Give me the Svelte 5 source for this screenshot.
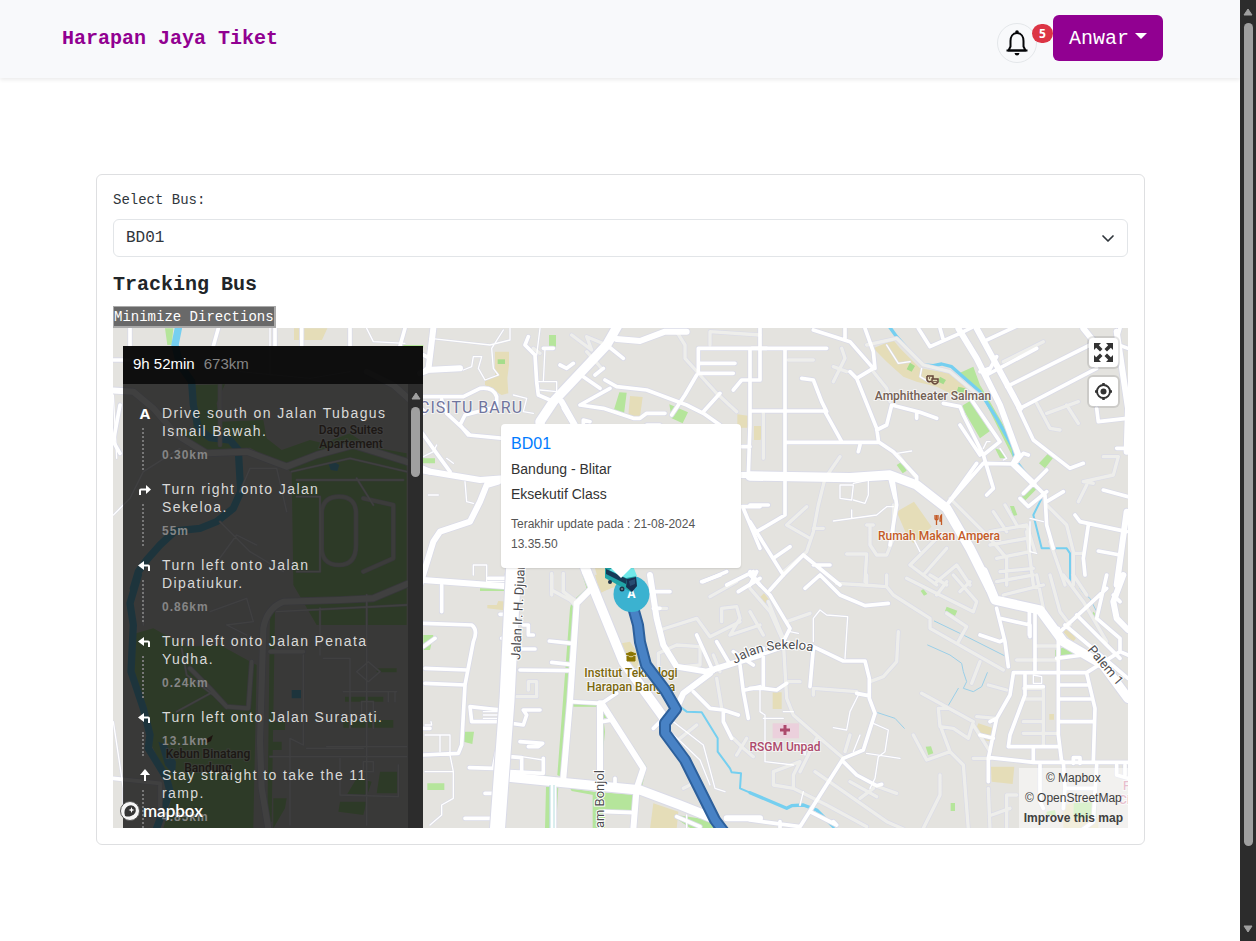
<script>
  let bus = $state('BD01');
  let showDirections = $state(true);

  const steps = [
    { icon: 'depart', text: 'Drive south on Jalan Tubagus Ismail Bawah.', distance: '0.30km' },
    { icon: 'right', text: 'Turn right onto Jalan Sekeloa.', distance: '55m' },
    { icon: 'left', text: 'Turn left onto Jalan Dipatiukur.', distance: '0.86km' },
    { icon: 'left', text: 'Turn left onto Jalan Penata Yudha.', distance: '0.24km' },
    { icon: 'left', text: 'Turn left onto Jalan Surapati.', distance: '13.1km' },
    { icon: 'straight', text: 'Stay straight to take the 11 ramp.', distance: '4.85km' }
  ];

  // Map geometry, one entry per tile; each tile is drawn at a third of its own units.
  const tiles = [
    {
      x: -3, y: -3,
      green: 'M165 10H190L185 60H172ZM250 180L345 178L320 235L330 290L460 285L470 340L515 375L600 345L640 355L720 325L780 365L890 385V900H620L550 780L545 440L420 368L290 375L180 310L250 320ZM880 60H940V68H880ZM940 400L960 405V415L940 410Z',
      tan: 'M552 10H652L636 45H552Z',
      water: 'M205 10L195 60L210 120L245 170L250 240L265 310L300 338L360 345L385 375L392 500L370 550L320 590L270 610L195 618L150 660L110 705L85 740L70 790',
      pond: 'M655 415L672 410L688 420L682 438L662 435Z',
      faint: 'M635 560Q640 515 687 515Q740 515 738 570V660Q738 720 687 720Q632 720 635 660ZM760 520L850 540V700L760 740M330 180V360',
      thin: 'M10 570L60 520L100 440L210 370M480 10V150M770 10L790 50L885 55M390 140L600 160L720 140M10 210L20 400M545 440L720 400L890 440M560 465H880M560 515H630V740H560M390 500L420 430H500L530 560M330 590L420 680L520 740M300 740L380 630L440 660M740 460L790 540',
      street: 'M60 10V63M325 10L310 63M495 10V63M575 10V63M720 10V63M885 10L870 63M10 105H60M30 240L10 350L30 385M940 90L960 100',
      major: 'M-10 195L70 200L130 250L200 330L290 385L410 380L530 425L620 390L730 360L890 410L960 440M770 140L850 180L940 260',
      trunk: ''
    },
    {
      x: -3, y: 247,
      green: 'M78 175L130 160L230 215L330 210L440 270L430 760H160L190 650L120 500L100 400L70 290ZM480 110H495L485 740H472ZM600 0H890L790 55L680 45ZM480 440H525V465H480ZM480 500H515V525H480ZM740 610L785 620L770 665L710 660ZM810 590H865V655H800ZM490 670H530L525 700L490 760ZM690 680H770L760 720L685 710ZM705 365H820V380H705ZM800 280H860V292H800ZM700 435H850V458H700ZM940 180H960V220H940Z',
      tan: '',
      water: 'M85 0L60 85L70 150L63 290L100 400L120 480L115 520L170 610L180 650L140 760',
      pond: 'M545 345H573V370H545ZM145 500L170 510L198 560L195 605L165 570Z',
      faint: '',
      thin: 'M100 20V150M215 220L230 300L310 360L350 400M200 410L310 350M500 110L890 90M580 240V510L540 490V750M480 545H890M690 550V660L865 665V570M630 100V240M640 250H720V460M10 440L40 640V700M300 110L410 70L430 140L350 150L410 180M770 60V750M740 290L775 260L810 290L775 320ZM755 440V380H790V460M700 350H860M835 380V350H855V380M590 520H760M650 515H890M760 560H790V590H760Z',
      street: 'M480 230H580M425 260L415 400L350 395L300 340L240 280M940 460H960M10 610L150 625V720',
      major: 'M920 15L790 70L690 75L520 80Q470 100 460 160L450 500L455 640L475 760',
      trunk: ''
    },
    {
      x: 307, y: -3,
      green: 'M387 30H408V65H387ZM598 202L620 203L612 267L580 260ZM748 238L804 262L788 295L755 280ZM480 730L500 790H515L490 730ZM5 400L45 400V415H5Z',
      tan: 'M225 80H267V120L262 160L265 205L245 210L195 180L195 160L225 155ZM630 213L668 216L660 275L625 272ZM952 268L984 272V308H952ZM1002 303H1030V345L1005 335ZM525 730H555L600 780L545 800Z',
      park: 'M233 103H255V117H233Z',
      water: '',
      pond: '',
      faint: 'M455 30L515 75L500 35L560 60M500 80L545 130M770 20L795 60V100L840 150L890 205L950 260M870 60V20L1020 30M340 70L360 85M395 745V810M430 745V800',
      thin: 'M30 40L210 60L270 45V10M250 15L215 70L220 130L235 150L195 165L175 130L185 95H160L155 125L130 135M360 10L350 90M375 70L370 170M280 210L320 220L310 260L340 265M355 170H410V200L360 195M25 510H55M10 395L40 380L50 360M135 470L140 530L160 535M160 750V720H200V770H260M80 400L100 415',
      street: 'M325 35L315 60L345 90L350 170L355 210L390 225M370 70H400M420 120L440 130L460 115M560 60L610 100M490 155L540 190M570 190L480 240L550 250L640 280H660L680 265H735M555 165L590 185L680 195L800 240L850 265L900 300M830 150L795 210L755 270M835 145V70H1040M835 115H945M835 145H940M940 195L965 165H1020V-10M990 70V300L985 450M965 365H990M10 215L130 215L180 190Q220 185 230 215V245L135 270L120 300L145 330L250 340M65 225L80 265L150 330M0 315L50 385L90 440M430 250L460 300M490 320V285L510 290M900 205L850 260M965 545H1020M970 550L1020 670M850 770L920 740M920 780L1000 740M680 300H720M525 150L550 130',
      major: 'M40 10L25 135L0 145M20 135L120 130M590 42L660 48L735 20H800M0 435L90 450L180 465L250 460M235 470L200 480L180 530L150 590L60 620L40 650L0 780M425 230L470 310M955 450H1040',
      trunk: 'M600 -10L560 60L400 230L360 290L370 420L500 740'
    },
    {
      x: 307, y: 247,
      green: 'M490 0H510L515 40L470 85L465 160L430 610L412 600L450 100L455 80L500 40ZM265 40H278L270 200L262 150ZM180 40H270V48H180ZM12 180H40L30 225H12ZM133 470L162 470L157 507L130 500ZM270 588L410 605L400 615L265 600ZM378 635H415L408 762H375ZM22 625H73V645H22ZM455 385L545 390L555 470L545 570H535V395H460ZM550 390L570 430H548ZM580 440L590 440L680 575L665 640L650 630L665 585ZM518 650L655 660L640 762H630L640 705H555V762H518ZM770 720L870 735L900 762H815L775 735ZM450 640L520 650V660L455 648Z',
      tan: 'M525 0L580 -10L590 30L540 55ZM605 205L630 200L660 245L650 280L622 270ZM202 90L230 90L235 78L265 80V107L202 100ZM700 685L775 710L770 762H690Z',
      water: '',
      pond: '',
      faint: 'M395 0V45L450 75L465 90M430 0V50L470 80M720 165L830 130L870 185L960 140M715 270V235L770 210L840 215V270L790 275M870 65L950 20M905 140V100L950 95L960 130L930 180L1020 150M890 310L905 400M900 290L880 240M940 490L970 520L1000 545M780 490L830 450M290 365H350V320H325V345M790 640L810 630M710 100H740M980 490L950 540',
      thin: 'M760 440L850 510L885 640L915 650M740 460L840 555L870 630M90 480V530L80 540M15 480H90M0 540H90L100 590V670L65 690V720L30 750M15 590H100M60 480V530M15 450H35L33 440M190 400H240M190 410H240M190 420H240M190 430H240M305 545L370 555M800 720V762',
      street: 'M65 30V110M10 145L155 150Q175 165 160 200L135 330L125 510L115 535L10 540M15 280L140 285M15 325L135 330M10 215L45 190M240 118H270M245 190H275M310 150H325V180H340M300 222H345M388 198L455 205M395 262L450 268M300 285L450 287M300 500L368 505L355 515H325M155 440L150 395L240 405M155 440L235 440L310 450L320 420L310 405L360 405M148 578L220 580L230 530M268 545L305 548V595M370 550V595L270 590M195 655H220M135 730H215M585 610V640M555 710L640 713M545 440L580 435M450 380L545 385L590 355M820 350L870 400L910 405L955 420M910 405V440L935 490M960 270L970 350L985 430M1020 335L975 345M830 180L880 290M890 200L925 260M845 20L900 0M955 50L1020 10M700 100H720M690 50H750M940 230L1000 270M700 460L730 430M770 725L840 755M205 10H260V0',
      major: 'M470 85L520 35M470 85L450 380L430 610M540 385V640M545 385L670 580L650 640L640 762M400 630V762M920 730H1020M690 0L710 130L730 210L770 275L860 290L1020 240M870 295L790 355L770 400M10 15L280 35',
      trunk: 'M500 -10L610 260L740 440M255 605L400 620L660 645L780 690L880 730'
    },
    {
      x: 637, y: -3,
      green: 'M627 145L670 125L690 180L720 230L760 300L800 380L790 400L745 310L700 220L690 200ZM640 240L660 228L720 318L690 340L635 245ZM895 385L912 395L885 430L867 415ZM455 410L470 437L458 445L440 420ZM735 370L750 375L768 400L750 400ZM850 480L862 490L825 527L812 520ZM780 543H792L802 570L790 573Z',
      tan: 'M370 70L430 45L450 70L510 130L600 145L645 180L655 210L610 210L560 185L500 170L460 155L410 110ZM440 560L492 530L545 605L490 655L470 630ZM12 303H32V345H12Z',
      park: 'M480 113L495 123L485 140L470 133ZM570 155L588 165L580 178L565 170ZM625 185L645 190L640 205L620 200Z',
      water: 'M418 5L440 35L480 80L520 120L550 122L575 117L605 125L650 165L690 200L740 280L790 370L795 405L850 475',
      stream: 'M875 520L850 570L860 610L875 670H950L960 685V770',
      pond: '',
      faint: 'M370 140L410 190L420 230M270 395L225 460L205 540L190 620L170 680L100 740M115 105H190M275 70L285 100L250 170M250 125L290 140M40 265V400M445 390L495 455M350 60L440 40L520 120L600 140L690 215M600 520L720 640L770 700V780M730 560L770 620M765 540L800 600M720 620L830 600L855 680M830 620L850 780M720 660L830 640M740 700L840 680M750 740L850 730M860 235L900 310L930 315M890 265L985 230M950 240L985 295M1000 470L1090 450L1105 395H1060M1000 470L1030 475M1010 480L985 530M890 540L950 600L970 680V780M900 650L945 780M760 110L880 50M970 685H1000M360 600V660L380 690L410 690L430 640V540M290 687H350L345 770M370 600H350M170 545L110 600L180 640M190 610H220M480 720L560 780M480 720L560 640M520 750L590 670M560 770L620 720L660 780',
      thin: 'M410 60L445 115L480 110M515 130L510 155L535 170M440 385L485 378M270 480L310 480L305 525L270 520ZM310 475L355 465V510L345 535L310 525M250 588L380 570L410 545H430M305 555V580M700 370L710 350H720M840 580L880 590M840 590V680L860 685M490 640L510 680M750 370L770 400L760 405',
      street: 'M5 70H230M105 70V260V430V570L20 620M5 258H225M225 260L275 350M105 352H385M155 160L190 165L215 230L230 260M190 15L300 50L370 130L320 160L300 140M345 10L370 80L375 130M320 160L380 310L385 345M285 10V45M380 315L410 300L425 240L510 262L560 280M500 280V265M385 350L430 380L500 455V470M325 380L330 360M505 10L540 65L630 25L680 0M570 10L580 45M420 460L435 520M0 540H55M0 590L100 750L160 690L270 780M70 700L120 665M190 720H240M0 740L30 780M0 780L20 740M630 245L640 270L700 390L750 350L665 225M580 235L630 245M630 300L690 390M700 390L730 490L710 510M800 410L820 385L835 390M700 50L850 -20M740 95L710 150L860 70M720 130L690 140M770 185L1020 60M810 250L1040 130M1040 250L1045 290L1130 280M850 345L960 430L1000 415M805 250L850 345M820 505L850 475L890 435M810 520L835 545L890 500M890 530L940 500M975 570L990 590L1130 620M1015 600L1000 700L1005 750M1045 678L1110 690M1060 495L1134 515M1100 370H1134M680 415L590 540M590 540L700 415L790 417M850 475L885 510L890 600L910 670M1080 50L1134 70M1110 10L1090 80M430 470L440 540L420 660',
      major: 'M625 10L680 100L750 240L805 390L790 417L850 475M680 10L810 250M1000 10L1040 60M1100 20L1134 250L1130 380M1130 560L1100 780',
      trunk: 'M0 453L300 458L420 450L500 480L590 550L660 670L720 790'
    },
    {
      x: 637, y: 247,
      green: 'M520 42L532 57L522 62L512 48ZM590 95L622 107L615 123L585 108ZM527 515L543 514L550 535L535 540ZM602 684H615V708H602ZM915 225L950 215L985 245H915ZM1030 110L1043 125L1035 135L1020 125ZM970 685L1040 680V730H970ZM890 710L915 705L918 720H890Z',
      tan: 'M42 55L58 75L38 90L25 72ZM68 352H95V402H68ZM685 445L730 460L725 500L700 495L675 470ZM723 575H793L788 627L725 620ZM945 152L978 190L968 202L935 165ZM898 417H912V434H898ZM940 690L970 685V730H1045V762H940Z',
      pink: 'M68 445H147V490H68Z',
      water: 'M0 653L110 700L125 692L160 690L200 705L250 755',
      stream: 'M-210 395L-190 410L-145 412L-97 490V530L-60 580L-55 592L-27 595L-30 640L0 653',
      stream2: 'M553 138L640 180L765 243M533 210L600 240L635 265L640 290L650 320L640 340L670 350L695 335L712 293M625 340L593 395M380 412L435 430L463 460M990 40L1000 55L1020 70L1040 110',
      pond: '',
      faint: 'M0 40L60 110L100 200L110 370L130 420L210 490L280 550M0 110L40 180M55 80L100 190M110 140L180 115M260 25L340 30L410 35L430 60L540 130V160L760 285M350 0V25M410 0V30M445 170L440 260L400 305L360 320M470 10L550 50L670 110L680 80L610 0M560 60L590 20M540 0L590 30M630 50L660 20M590 115L650 155L625 200M690 260L665 325M715 330L770 345M515 355L670 440L655 490L610 460L570 455L565 400L590 400M490 480L530 555L600 530L640 570L655 762M570 600V660L520 760M570 450L600 530M670 450L720 530M680 425L740 430M800 255H920M860 213H920M670 550H720M715 640L720 762M725 720L780 700M115 320H150M190 340L320 350M190 340V360M70 590L150 560L130 600V640L70 630ZM130 640L230 690L350 755M200 490L150 590M195 590L410 740M370 640L330 670M300 620L380 665M300 480L285 530M370 630L440 655M410 740L460 762M740 20L850 0M760 60L880 30M900 0L930 110L960 150M860 0L880 100M940 0L1000 80L1070 200M970 0L1010 60M820 340H880V510M820 372H880M820 440H880M820 475H920M770 762V660H800',
      thin: 'M190 200V130L210 105L230 120L293 125L285 250M325 360L300 410L290 465L250 458M370 445L415 465L405 530L385 545L375 610L360 640M350 535L450 550M330 480L310 530M30 340V410L45 420V560L130 570M45 430H90M850 300V325H875V305ZM120 170L145 175M130 505H165V540M150 690L160 650M40 430H100M100 410H130',
      street: 'M165 40L210 0L270 60L345 92L415 85M0 0L60 60L120 160L90 220L0 250M40 220V340L80 345L110 325M0 340H40M160 210L190 215L280 258H345L358 310V370L375 415L340 525L280 550L150 755M190 220L180 335M320 355L355 362M280 560L320 600L380 632L395 628M0 735L150 755M180 710L260 750L250 740M60 45L100 0M740 100L765 200L775 275M690 180L750 200L760 195M750 130L840 150V185M838 110V180M855 110V290M925 160V480L935 560M790 293H1010L1110 230M790 295L780 360L740 430L715 550V620M925 330H1010M925 372H1020M925 440H1030M1010 295L1035 400L1030 560M825 300V360L780 480L775 515H925M850 520V560M870 570V680L880 700M940 560L945 640M945 640L940 700M720 548L850 562H1134M1040 570L1030 740L1000 762M970 565V548H990V565M690 480L730 490M740 430L720 440M925 175L1070 40M945 150L1134 310M980 120L1110 250M1110 80L1090 60M1070 0L1040 130L1110 190V230L1134 240M920 250L1000 240M1100 570V600L1134 610M1125 570V600M825 335H880M945 640H1035M90 740V762',
      major: 'M1120 0L1090 80L1100 130L1134 165',
      trunk: 'M700 -10L735 75L870 105L940 200L1060 270L1134 370'
    }
  ];

  const casing = [
    ['thin', 7], ['faint', 14], ['street', 16], ['major', 23], ['trunk', 34]
  ];
  const fill = [
    ['faint', 10], ['thin', 4], ['street', 11], ['major', 18], ['trunk', 28]
  ];
</script>

<div class="page">
  <header>
    <a class="brand" href="/">Harapan Jaya Tiket</a>
    <div class="account">
      <button class="bell" type="button" aria-label="Notifications">
        <svg width="28" height="28" viewBox="0 0 28 28">
          <path d="M14 4C9.500 4 7.500 8 7.500 12V17.500L5.500 21.500H22.500L20.500 17.500V12C20.500 8 18.500 4 14 4Z" fill="none" stroke="#050608" stroke-width="2" stroke-linejoin="round" />
          <path d="M3.500 21.500H24.500" stroke="#050608" stroke-width="2" />
          <circle cx="14" cy="3" r="1.800" fill="#050608" />
          <path d="M11.500 24H16.500Q16 26.500 14 26.500Q12 26.500 11.500 24Z" fill="#050608" />
        </svg>
      </button>
      <span class="badge">5</span>
      <button class="user" type="button">Anwar<span class="caret"></span></button>
    </div>
  </header>

  <main>
    <section class="card">
      <label for="bus">Select Bus:</label>
      <div class="select">
        <select id="bus" bind:value={bus}>
          <option>BD01</option>
        </select>
        <svg width="16" height="16" viewBox="0 0 16 16"><path d="M3 6L8 11L13 6" fill="none" stroke="#30363c" stroke-width="1.700" stroke-linecap="round" stroke-linejoin="round" /></svg>
      </div>
      <h1>Tracking Bus</h1>
      <button class="toggle" type="button" onclick={() => (showDirections = !showDirections)}>Minimize Directions</button>

      <div class="map">
        <svg class="canvas" viewBox="0 0 1015 500" preserveAspectRatio="xMinYMin slice" aria-hidden="true">
          <rect width="1015" height="500" fill="#e4e3df" />
          {#each tiles as t}
            <g transform="translate({t.x} {t.y}) scale(.33333)">
              <path d={t.green} fill="#b5e59b" />
              <path d={t.tan} fill="#e5ddb8" />
              <path d={t.park ?? ''} fill="#a5dd8b" />
              <path d={t.pink ?? ''} fill="#ebd0dc" />
              <path d={t.pond} fill="#75cff0" />
            </g>
          {/each}
          {#each tiles as t, i}
            <g class="lines" transform="translate({t.x} {t.y}) scale(.33333)">
              <path d={t.water} stroke="#75cff0" stroke-width={i < 2 ? 22 : 10} />
              <path d={t.stream ?? ''} stroke="#75cff0" stroke-width="6" />
              <path d={t.stream2 ?? ''} stroke="#9bcfe8" stroke-width="3" />
            </g>
          {/each}
          {#each casing as [kind, width]}
            {#each tiles as t}
              <path class="line" transform="translate({t.x} {t.y}) scale(.33333)" d={t[kind]} stroke="#dadbe7" stroke-width={width} />
            {/each}
          {/each}
          {#each fill as [kind, width]}
            {#each tiles as t}
              <path class="line" transform="translate({t.x} {t.y}) scale(.33333)" d={t[kind]} stroke={kind === 'faint' ? '#eeeeeb' : '#fff'} stroke-width={width} />
            {/each}
          {/each}

          <g transform="translate(-113 -328)">
            <path class="line" d="M514 560L507 700L497 835" stroke="#dadbe7" stroke-width="17" />
            <path class="line" d="M514 560L507 700L497 835" stroke="#fff" stroke-width="15" />
            <path d="M552 785V828" stroke="#b5dede" stroke-width="5" />
            <path d="M552 785V828" stroke="#fff" stroke-width="3" />

            <g class="labels">
              <text x="523" y="413" fill="#70759e" font-size="16" letter-spacing="1">CISITU BARU</text>
              <g fill="#735f55">
                <text x="933" y="400">Amphitheater Salman</text>
                <text x="351" y="434">Dago Suites</text>
                <text x="351" y="448">Apartement</text>
                <text x="208" y="758">Kebun Binatang</text>
                <text x="208" y="772">Bandung</text>
              </g>
              <text x="939" y="540" fill="#c45c28">Rumah Makan Ampera</text>
              <text x="785" y="751" fill="#ad4a6c">RSGM Unpad</text>
              <text x="631" y="677" fill="#7b680d">Institut Teknologi</text>
              <text x="631" y="691" fill="#7b680d">Harapan Bangsa</text>
              <g class="street" fill="#4d4d50">
                <text transform="translate(520 660) rotate(-87)">Jalan Ir. H. Djuanda</text>
                <text transform="translate(604 770) rotate(-90)">Jalan Imam Bonjol</text>
                <path id="sekeloa" d="M735 664Q766 645 804 650L840 656" fill="none" stroke="none" />
                <text><textPath href="#sekeloa">Jalan Sekeloa</textPath></text>
                <text transform="translate(1087 650) rotate(50)">Palem 1</text>
              </g>
              <g class="clinic" fill="#cf7f9c">
                <text x="1123" y="790">F</text>
                <text x="1119" y="804">Ci</text>
              </g>
            </g>

            <path d="M780 730H790M785 725V735" stroke="#ad4a6c" stroke-width="3" />
            <path d="M935 515V519Q937 521 938 519V515M936.500 515V525M941.500 525V515Q940 516 940 521H942" fill="none" stroke="#c45c28" stroke-width="1.300" />
            <path d="M626 654L631 652L636 654L631 656ZM627 656V661H635V656L631 658Z" fill="#8b7500" stroke="#8b7500" />
            <path d="M927 376H933V379M927 376V380Q929 383 931 381M929 378H930M932 379H938V382Q935 386 932 382ZM934 381V382M936 381V382" fill="none" stroke="#66473a" stroke-width="1.500" />
            <path d="M204 741L208 738L213 735L211 741L207 743Z" fill="#735040" />

            <g fill="none" stroke-linejoin="round">
              <path d="M631 600L638 625L640 642L646 665L665 690L676 709L665 723V733L685 760L715 820L727 836" stroke="#2d609c" stroke-width="12" />
              <path d="M631 600L638 625L640 642L646 665L665 690L676 709L665 723V733L685 760L715 820L727 836" stroke="#4882c5" stroke-width="8" />
            </g>
            <circle cx="631.500" cy="594" r="18" fill="#3bb2d0" />
            <text x="631.500" y="598" text-anchor="middle" class="origin">A</text>
            <path d="M605 568L608 567L636 576L637 586L631 592L605 578Z" fill="#20a5a8" />
            <path d="M617 566H633L637 576L626 578L609 570Z" fill="#70e8e9" />
            <path d="M606 569L627 579L626 584L606 574Z" fill="#153b57" />
            <path d="M627 579L636 577L637 586L632 592L626 587Z" fill="#183052" />
            <path d="M629 581L635 579V584L630 586Z" fill="#294d73" />
            <circle cx="610" cy="582" r="2" fill="#203449" />
            <circle cx="622" cy="589" r="2.500" fill="#203449" />
            <circle cx="622" cy="589" r="1" fill="#718796" />
          </g>
        </svg>

        {#if showDirections}
          <aside class="directions">
            <div class="summary"><strong>9h 52min</strong><span>673km</span></div>
            <div class="body">
              <ol>
                {#each steps as step}
                  <li>
                    <div class="guide">
                      <svg width="14" height="18" viewBox="0 0 14 18" fill="none" stroke="#fff" stroke-width="2">
                        {#if step.icon === 'depart'}
                          <text class="depart" x="7" y="15">A</text>
                        {:else if step.icon === 'right'}
                          <path d="M2 15V10.500Q2 9.500 3 9.500H9" /><path d="M8 5L13 9.500L8 14Z" fill="#fff" stroke="none" />
                        {:else if step.icon === 'left'}
                          <path d="M11 15V10.500Q11 9.500 10 9.500H5" /><path d="M6 5L0 9.500L6 14Z" fill="#fff" stroke="none" />
                        {:else}
                          <path d="M7 15V7" /><path d="M2 9L7 3L12 9Z" fill="#fff" stroke="none" />
                        {/if}
                      </svg>
                      <i></i>
                    </div>
                    <div class="info">
                      <p>{step.text}</p>
                      <span>{step.distance}</span>
                    </div>
                  </li>
                {/each}
              </ol>
              <div class="scroll">
                <svg width="10" height="8" viewBox="0 0 10 8"><path d="M5 1L9 7H1Z" fill="#a0a0a0" stroke="#a0a0a0" stroke-linejoin="round" /></svg>
                <i></i>
              </div>
            </div>
          </aside>
        {/if}

        <a class="logo" href="https://www.mapbox.com/">
          <svg width="20" height="20" viewBox="0 0 20 20"><circle cx="10" cy="10" r="9.500" fill="#f5f5f5" stroke="#555" /><path d="M5 15Q3 8 8 5Q13 3 15.500 7Q17 13 11 15Q8 16 5 15Z" fill="#343434" /><path d="M11.500 6L12.300 8.200L14.500 9L12.300 9.800L11.500 12L10.700 9.800L8.500 9L10.700 8.200Z" fill="#fff" /></svg>
          <span>mapbox</span>
        </a>

        <article class="popup">
          <h2>BD01</h2>
          <p>Bandung - Blitar</p>
          <p>Eksekutif Class</p>
          <small>Terakhir update pada : 21-08-2024 13.35.50</small>
        </article>

        <div class="controls">
          <button type="button" aria-label="Enter fullscreen">
            <svg width="29" height="29" viewBox="0 0 29 29"><path d="M5 5H12L9.800 7.200L13.500 11L11 13.500L7.200 9.800L5 12ZM24 5V12L21.800 9.800L18 13.500L15.500 11L19.200 7.200L17 5ZM5 24V17L7.200 19.200L11 15.500L13.500 18L9.800 21.800L12 24ZM24 24H17L19.200 21.800L15.500 18L18 15.500L21.800 19.200L24 17Z" fill="#333" /></svg>
          </button>
          <button type="button" aria-label="Find my location">
            <svg width="29" height="29" viewBox="0 0 29 29"><circle cx="14.500" cy="14.500" r="6.500" fill="none" stroke="#333" stroke-width="2" /><circle cx="14.500" cy="14.500" r="3" fill="#333" /><path d="M14.500 6V8M14.500 21V23M6 14.500H8M21 14.500H23" stroke="#333" stroke-width="2.500" /></svg>
          </button>
        </div>

        <div class="credits">
          <a href="https://www.mapbox.com/about/maps">© Mapbox</a>
          <a href="https://www.openstreetmap.org/copyright">© OpenStreetMap</a>
          <a class="improve" href="https://apps.mapbox.com/feedback">Improve this map</a>
        </div>
      </div>
    </section>
  </main>
</div>

<div class="page-scroll" aria-hidden="true">
  <svg width="10" height="8" viewBox="0 0 10 8"><path d="M5 1L9 7H1Z" fill="#a0a0a0" stroke="#a0a0a0" stroke-linejoin="round" /></svg>
  <div class="track"><i></i></div>
  <svg width="10" height="8" viewBox="0 0 10 8"><path d="M5 7L9 1H1Z" fill="#a0a0a0" stroke="#a0a0a0" stroke-linejoin="round" /></svg>
</div>

<style>
  :global(body) { margin: 0; background: #fff; }
  * { box-sizing: border-box; }
  button { cursor: pointer; }
  a { color: inherit; text-decoration: none; }

  .page {
    min-height: 100vh;
    padding-right: 16px;
    font-family: "Courier New", "Liberation Mono", monospace;
    color: #212529;
  }
  header {
    display: flex;
    justify-content: space-between;
    align-items: flex-start;
    padding: 15px 77px 15px 62px;
    background: #f8f9fb;
    box-shadow: 0 2px 4px rgba(0, 0, 0, .08);
  }
  .brand { font-size: 20px; line-height: 48px; font-weight: 700; color: #910091; }
  .account { display: flex; align-items: flex-start; }
  .bell {
    display: grid;
    place-items: center;
    width: 40px;
    height: 40px;
    margin-top: 8px;
    padding: 0;
    border: 1px solid #e4e7ea;
    border-radius: 50%;
    background: #f8f9fb;
  }
  .badge {
    position: relative;
    margin: 9px 0 0 -5px;
    padding: 0 7px;
    border-radius: 10px;
    background: #dc3545;
    color: #fff;
    font: 700 12px/19px "Open Sans", sans-serif;
  }
  .user {
    display: flex;
    align-items: center;
    gap: 6px;
    height: 46px;
    padding: 0 16px;
    border: 0;
    border-radius: 6px;
    background: #910091;
    color: #fff;
    font-family: inherit;
    font-size: 20px;
  }
  .caret { border: 6px solid transparent; border-top-color: #fff; border-bottom: 0; margin-bottom: 4px; }

  main { padding: 96px 95px 96px 96px; }
  .card { padding: 16px; border: 1px solid #dedfe1; border-radius: 6px; }
  label { display: block; font-size: 14px; line-height: 18px; margin-bottom: 10px; color: #30363c; }
  .select { display: grid; align-items: center; }
  .select > * { grid-area: 1 / 1; }
  .select svg { justify-self: end; margin-right: 12px; pointer-events: none; }
  select {
    appearance: none;
    width: 100%;
    height: 38px;
    padding: 0 36px 0 12px;
    border: 1px solid #e2e5e8;
    border-radius: 6px;
    background: #fff;
    color: #30363c;
    font-family: inherit;
    font-size: 16px;
  }
  h1 { margin: 16px 0 9px; font-size: 20px; line-height: 24px; }
  .toggle {
    display: block;
    height: 22px;
    padding: 0;
    border: 1px solid #aaa;
    border-width: 1px 2px 2px 1px;
    background: #696969;
    color: #fff;
    font-family: inherit;
    font-size: 14px;
    line-height: 18px;
  }

  .map {
    position: relative;
    height: 500px;
    overflow: hidden;
    font-family: "Liberation Sans", Arial, sans-serif;
  }
  .canvas { display: block; width: 100%; height: 100%; }
  .lines path, .line { fill: none; stroke-linecap: round; stroke-linejoin: round; }
  .labels text {
    font-family: Roboto, sans-serif;
    font-weight: 500;
    text-anchor: middle;
    paint-order: stroke;
    stroke: rgba(255, 255, 255, .6);
    stroke-width: 2px;
  }
  .labels { font-size: 12px; }
  .labels > text:first-child { text-anchor: end; font-weight: 400; }
  .labels .street text { text-anchor: start; font-weight: 400; font-size: 13px; stroke: #fff; }
  .labels .street text:nth-of-type(2) { text-anchor: end; }
  .labels .clinic text { text-anchor: start; }
  .origin { fill: #fff; font: 700 12px "Open Sans", sans-serif; }

  .directions {
    position: absolute;
    top: 18px;
    bottom: 0;
    left: 10px;
    display: flex;
    flex-direction: column;
    width: 300px;
    background: rgba(0, 0, 0, .75);
    color: #fff;
  }
  .summary {
    display: flex;
    gap: 9px;
    flex: none;
    height: 38px;
    padding: 0 10px;
    background: rgba(0, 0, 0, .75);
    font-size: 15px;
    line-height: 36px;
  }
  .summary strong { font-weight: 400; }
  .summary span { color: #858585; }
  .body { display: flex; flex: 1; min-height: 0; overflow: hidden; }
  ol { flex: 1; margin: 0; padding: 20px 18px 0 15px; list-style: none; }
  li { display: flex; gap: 10px; }
  .guide { display: flex; flex-direction: column; width: 14px; padding-bottom: 10px; }
  .guide i { flex: 1; margin: 6px 0 0 4px; border-left: 2px dotted #777; }
  .depart { fill: #fff; stroke: none; font: 700 15px "Open Sans", sans-serif; text-anchor: middle; }
  .info { flex: 1; padding-bottom: 16px; letter-spacing: .1em; }
  .info p { margin: 0 0 6px; font-size: 14px; line-height: 18px; color: #d9d9d9; letter-spacing: .1em; }
  .info span { display: block; font-size: 12px; line-height: 18px; font-weight: 700; color: #858585; letter-spacing: 1px; }
  .scroll { display: flex; flex-direction: column; align-items: center; width: 15px; padding-top: 8px; background: #2c2c2c; }
  .scroll i { width: 9px; height: 70px; margin-top: 7px; border-radius: 5px; background: #a0a0a0; }

  .logo { position: absolute; left: 7px; bottom: 7px; display: flex; align-items: center; gap: 3px; color: #fff; }
  .logo span { font: 600 17px/20px Lato, sans-serif; text-shadow: 0 0 2px #333; }

  .popup {
    position: absolute;
    top: 96px;
    left: 388px;
    width: 240px;
    padding: 9px 10px 14px;
    border-radius: 4px;
    background: #fff;
    box-shadow: 0 1px 2px rgba(0, 0, 0, .1);
    color: #333;
  }
  .popup::after {
    content: "";
    position: absolute;
    top: 100%;
    left: 50%;
    margin-left: -10px;
    border: 10px solid transparent;
    border-top-color: #fff;
    border-bottom: 0;
  }
  .popup h2 { margin: 0 0 4px; font-size: 16px; line-height: 22px; font-weight: 400; color: #007bff; }
  .popup p { margin: 0 0 5px; font-size: 14px; line-height: 20px; }
  .popup small { display: block; margin-top: 10px; font-size: 12px; line-height: 20px; color: #555; }

  .controls { position: absolute; top: 10px; right: 10px; display: grid; gap: 10px; }
  .controls button {
    display: grid;
    width: 29px;
    height: 29px;
    padding: 0;
    border: 0;
    border-radius: 4px;
    background: #fff;
    box-shadow: 0 0 0 2px rgba(0, 0, 0, .1);
  }
  .credits {
    position: absolute;
    right: 0;
    bottom: 0;
    display: grid;
    justify-items: center;
    padding: 0 5px;
    background: rgba(255, 255, 255, .5);
    color: #404040;
    font-size: 12px;
    line-height: 20px;
  }
  .improve { font-weight: 700; }

  .page-scroll {
    position: fixed;
    top: 0;
    right: 0;
    bottom: 0;
    display: flex;
    flex-direction: column;
    align-items: center;
    width: 16px;
    padding: 8px 0;
    background: #2c2c2c;
  }
  .track { flex: 1; margin: 7px 0; }
  .track i { display: block; width: 9px; height: 92%; border-radius: 5px; background: #a0a0a0; }
</style>
